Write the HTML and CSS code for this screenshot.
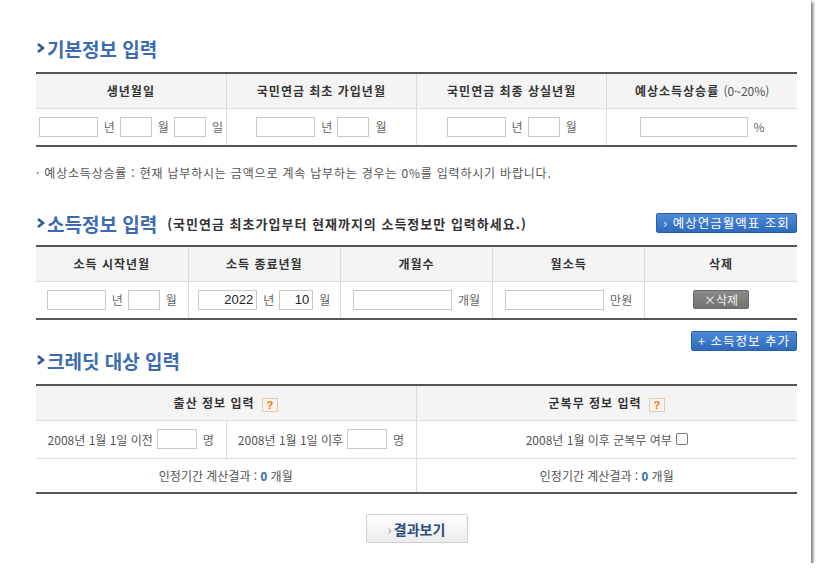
FILE: index.html
```html
<!DOCTYPE html>
<html lang="ko">
<head>
<meta charset="utf-8">
<title>국민연금 예상연금 계산</title>
<link rel="stylesheet" href="styles.css">
</head>
<body>
<div class="card">
  <h2 class="sec-title"><svg class="chev" viewBox="0 0 9 12" width="9" height="12"><polyline points="2,2 7,6 2,10" fill="none" stroke="currentColor" stroke-width="2.6"/></svg>기본정보 입력</h2>
  <table class="tbl t1">
    <colgroup><col><col><col><col></colgroup>
    <tr>
      <th>생년월일</th>
      <th>국민연금 최초 가입년월</th>
      <th>국민연금 최종 상실년월</th>
      <th>예상소득상승률 <span class="thin">(0~20%)</span></th>
    </tr>
    <tr>
      <td><div class="fld"><input class="inp w59"><span class="u">년</span><input class="inp w32"><span class="u">월</span><input class="inp w32"><span class="u">일</span></div></td>
      <td><div class="fld"><input class="inp w59"><span class="u">년</span><input class="inp w32"><span class="u">월</span></div></td>
      <td><div class="fld"><input class="inp w59"><span class="u">년</span><input class="inp w32"><span class="u">월</span></div></td>
      <td><div class="fld"><input class="inp w108"><span class="u">%</span></div></td>
    </tr>
  </table>
  <p class="note">· 예상소득상승률 : 현재 납부하시는 금액으로 계속 납부하는 경우는 0%를 입력하시기 바랍니다.</p>

  <div class="title-row">
    <h2 class="sec-title"><svg class="chev" viewBox="0 0 9 12" width="9" height="12"><polyline points="2,2 7,6 2,10" fill="none" stroke="currentColor" stroke-width="2.6"/></svg>소득정보 입력<span class="sub">(국민연금 최초가입부터 현재까지의 소득정보만 입력하세요.)</span></h2>
    <button class="btn-blue w141">› 예상연금월액표 조회</button>
  </div>
  <table class="tbl t2">
    <tr>
      <th>소득 시작년월</th>
      <th>소득 종료년월</th>
      <th>개월수</th>
      <th>월소득</th>
      <th>삭제</th>
    </tr>
    <tr>
      <td><div class="fld"><input class="inp w59"><span class="u">년</span><input class="inp w32"><span class="u">월</span></div></td>
      <td><div class="fld"><input class="inp w59" value="2022"><span class="u">년</span><input class="inp w34" value="10"><span class="u">월</span></div></td>
      <td><div class="fld"><input class="inp w99"><span class="u">개월</span></div></td>
      <td><div class="fld"><input class="inp w99"><span class="u">만원</span></div></td>
      <td><button class="btn-grey">×삭제</button></td>
    </tr>
  </table>

  <div class="between">
    <h2 class="sec-title"><svg class="chev" viewBox="0 0 9 12" width="9" height="12"><polyline points="2,2 7,6 2,10" fill="none" stroke="currentColor" stroke-width="2.6"/></svg>크레딧 대상 입력</h2>
    <button class="btn-blue w106">+ 소득정보 추가</button>
  </div>
  <table class="tbl t3">
    <colgroup><col class="c190"><col class="c190"><col></colgroup>
    <tr>
      <th colspan="2">출산 정보 입력 <span class="q">?</span></th>
      <th>군복무 정보 입력 <span class="q">?</span></th>
    </tr>
    <tr class="r2">
      <td><div class="fld">2008년 1월 1일 이전<input class="inp w40 ml4"><span class="u">명</span></div></td>
      <td><div class="fld">2008년 1월 1일 이후<input class="inp w40 ml4"><span class="u">명</span></div></td>
      <td><div class="fld">2008년 1월 이후 군복무 여부<span class="chk"></span></div></td>
    </tr>
    <tr class="r3">
      <td colspan="2">인정기간 계산결과 : <b class="num">0</b> 개월</td>
      <td>인정기간 계산결과 : <b class="num">0</b> 개월</td>
    </tr>
  </table>

  <div class="actions">
    <button class="btn-result"><span class="rchev">›</span>결과보기</button>
  </div>
</div>
</body>
</html>
```
FILE: styles.css
```css
* { box-sizing: border-box; }
html, body { margin: 0; padding: 0; background: #fff; }
body {
  font-family: "Noto Sans CJK KR", "Noto Sans", sans-serif;
  font-size: 12px;
  color: #555;
}
.card {
  width: 811px;
  height: 563px;
  background: #fff;
  box-shadow: 2px 2px 3px rgba(0, 0, 0, 0.55);
  padding: 35px 14px 0 36px;
}
.sec-title {
  margin: 0;
  height: 26px;
  display: flex;
  align-items: center;
  font-size: 19px;
  font-weight: bold;
  color: #3b6cb0;
  white-space: nowrap;
}
.chev { color: #2d5a99; margin-right: 2px; flex: none; }
.sub {
  font-size: 13px;
  color: #333;
  letter-spacing: 1px;
  margin-left: 10px;
  padding-top: 1px;
}
.tbl {
  width: 100%;
  border-collapse: collapse;
  table-layout: fixed;
  border-top: 2px solid #555;
  border-bottom: 2px solid #555;
}
.t1 { margin-top: 11px; }
.t2 { margin-top: 9px; }
.t3 { margin-top: 11px; }
.tbl th {
  height: 35px;
  padding: 0;
  background: #f4f4f4;
  font-size: 12px;
  font-weight: bold;
  letter-spacing: 1px;
  color: #333;
  border-left: 1px solid #dcdcdc;
  border-bottom: 1px solid #dcdcdc;
}
.tbl td {
  height: 38px;
  padding: 0;
  text-align: center;
  border-left: 1px solid #dcdcdc;
  color: #555;
}
.tbl th:first-child, .tbl td:first-child { border-left: none; }
.thin { font-weight: normal; letter-spacing: 0; color: #555; }
.c190 { width: 190px; }
.t3 tr.r2 td { border-bottom: 1px solid #dcdcdc; height: 38px; }
.t3 tr.r3 td { height: 35px; }

.fld {
  display: flex;
  justify-content: center;
  align-items: center;
}
.inp {
  height: 20px;
  border: 1px solid #c8c8c8;
  padding: 0 3px;
  font-family: "Liberation Sans", Arial, sans-serif;
  font-size: 13px;
  color: #222;
  text-align: right;
  background: #fff;
}
.w32 { width: 32px; }
.w34 { width: 34px; }
.w40 { width: 40px; }
.w59 { width: 59px; }
.w99 { width: 99px; }
.w108 { width: 108px; }
.ml4 { margin-left: 4px; }
.u { margin: 0 5px 0 6px; color: #666; }
.u:last-child { margin-right: 0; }

.note {
  margin: 17px 0 0;
  line-height: 18px;
  color: #555;
  letter-spacing: 0.8px;
}
.title-row {
  margin-top: 28px;
  display: flex;
  justify-content: space-between;
  align-items: center;
}
.between {
  margin-top: 11px;
  height: 42px;
  display: flex;
  justify-content: space-between;
  align-items: flex-start;
}
.between .sec-title { align-self: flex-end; }

.btn-blue {
  height: 20px;
  padding: 0;
  border: 1px solid #2c5fa6;
  border-radius: 2px;
  background: linear-gradient(#4d8ad6, #2f6bbd);
  color: #fff;
  font-family: inherit;
  font-size: 12.5px;
  letter-spacing: 1px;
  line-height: 18px;
}
.w141 { width: 141px; }
.w106 { width: 106px; }
.btn-grey {
  width: 56px;
  height: 19px;
  padding: 0;
  border: 1px solid #6a6a6a;
  border-radius: 2px;
  background: linear-gradient(#8a8a8a, #727272);
  color: #eee;
  font-family: inherit;
  font-size: 12px;
  line-height: 17px;
}
.q {
  display: inline-block;
  width: 16px;
  height: 14px;
  margin-left: 3px;
  border: 1px solid #e2cdb4;
  background: #fbf3ea;
  color: #e27a17;
  font-family: "Liberation Sans", Arial, sans-serif;
  font-size: 11px;
  font-weight: bold;
  line-height: 12px;
  text-align: center;
  letter-spacing: 0;
  vertical-align: middle;
}
.chk {
  display: inline-block;
  width: 12px;
  height: 12px;
  margin-left: 4px;
  border: 1px solid #777;
  border-radius: 2px;
  background: #fff;
}
.num { color: #2f6aa9; font-family: "Liberation Sans", Arial, sans-serif; }

.actions {
  margin-top: 20px;
  display: flex;
  justify-content: center;
}
.btn-result {
  width: 102px;
  height: 29px;
  padding: 0;
  border: 1px solid #cfcfcf;
  border-radius: 2px;
  background: linear-gradient(#ffffff, #ececec);
  color: #2a4d80;
  font-family: inherit;
  font-size: 14px;
  font-weight: bold;
}
.rchev { color: #999; font-weight: normal; margin-right: 2px; }
```
